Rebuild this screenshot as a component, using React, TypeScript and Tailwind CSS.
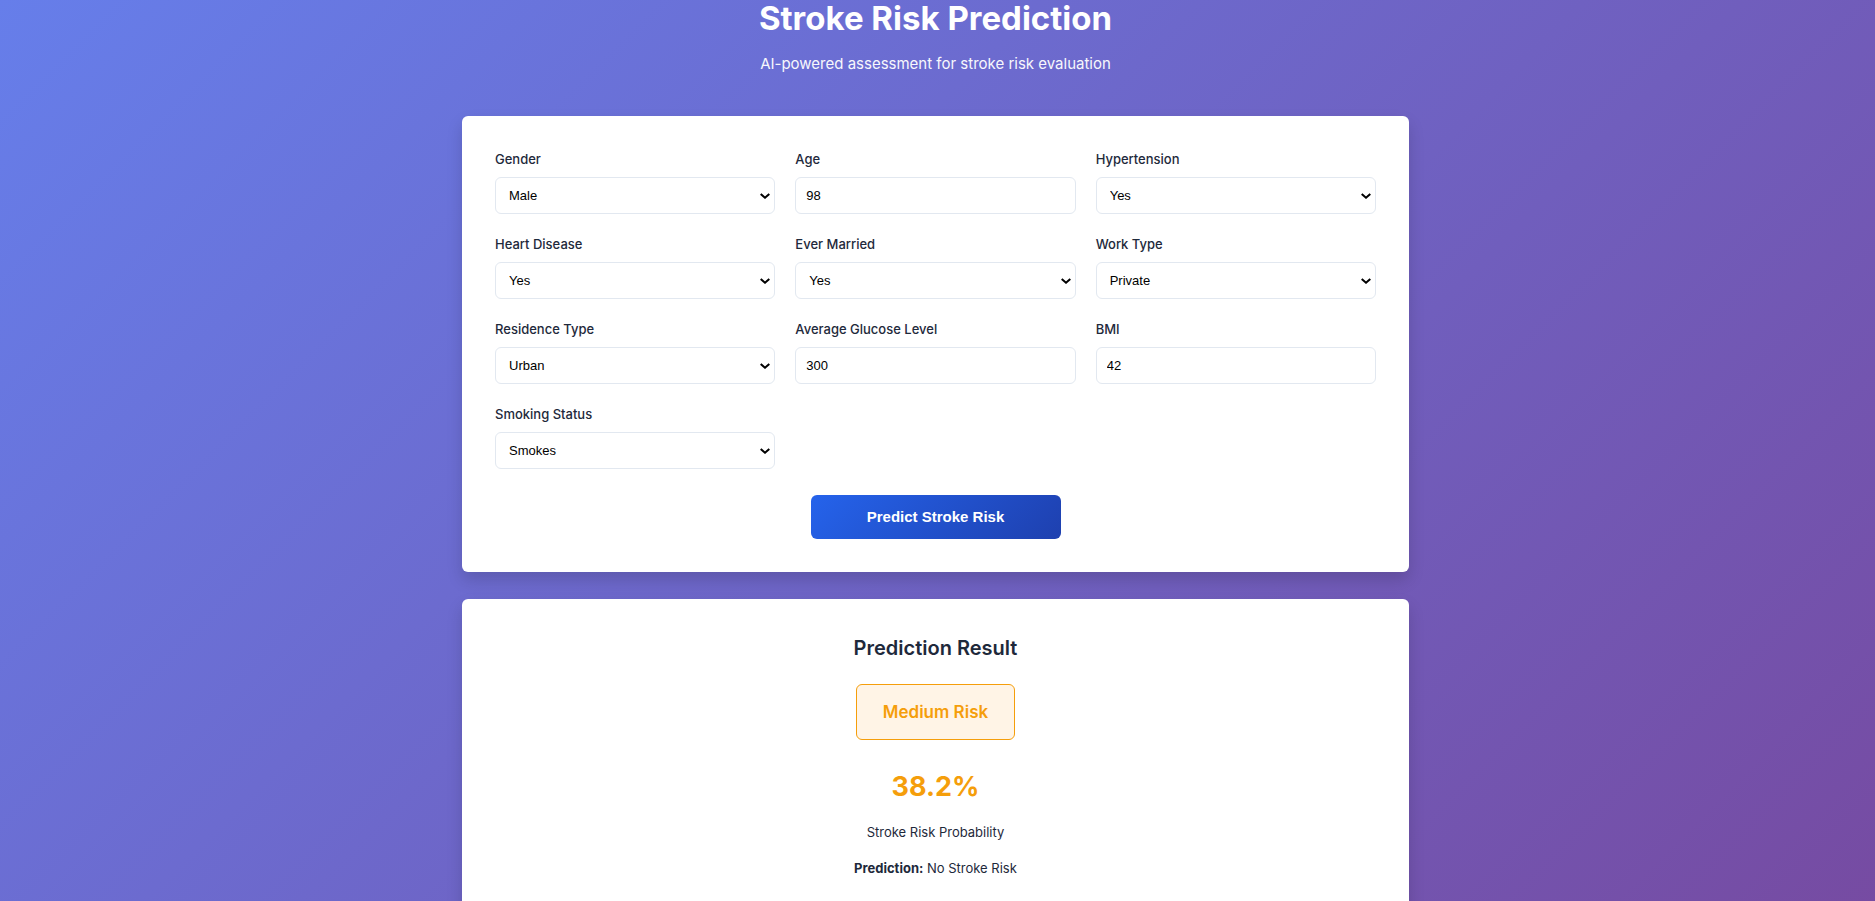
type Field =
  | { id: string; label: string; kind: "select"; options: string[]; value: string }
  | { id: string; label: string; kind: "number"; value: number };

const fields: Field[] = [
  { id: "gender", label: "Gender", kind: "select", options: ["Male", "Female"], value: "Male" },
  { id: "age", label: "Age", kind: "number", value: 98 },
  { id: "hypertension", label: "Hypertension", kind: "select", options: ["No", "Yes"], value: "Yes" },
  { id: "heart-disease", label: "Heart Disease", kind: "select", options: ["No", "Yes"], value: "Yes" },
  { id: "ever-married", label: "Ever Married", kind: "select", options: ["No", "Yes"], value: "Yes" },
  { id: "work-type", label: "Work Type", kind: "select", options: ["Private", "Self-employed"], value: "Private" },
  { id: "residence", label: "Residence Type", kind: "select", options: ["Urban", "Rural"], value: "Urban" },
  { id: "glucose", label: "Average Glucose Level", kind: "number", value: 300 },
  { id: "bmi", label: "BMI", kind: "number", value: 42 },
  { id: "smoking", label: "Smoking Status", kind: "select", options: ["Never smoked", "Smokes"], value: "Smokes" },
];

const control =
  "h-[37px] w-full rounded-md border border-[#e2e8f0] bg-white font-['Liberation_Sans',Arial,sans-serif] text-[13px] text-black";

function FormField({ field }: { field: Field }) {
  return (
    <div className="flex flex-col gap-2">
      <label htmlFor={field.id} className="text-[13px] leading-5 font-medium">
        {field.label}
      </label>
      {field.kind === "select" ? (
        <div className="relative">
          <select id={field.id} defaultValue={field.value} className={`${control} appearance-none pr-6 pl-[13px]`}>
            {field.options.map((option) => (
              <option key={option}>{option}</option>
            ))}
          </select>
          <svg
            aria-hidden="true"
            viewBox="0 0 10 6"
            className="pointer-events-none absolute inset-y-0 right-[5px] my-auto h-1.5 w-2.5"
          >
            <path d="M0.7 0.9 L5 4.7 L9.3 0.9" fill="none" stroke="#000" strokeWidth="2" />
          </svg>
        </div>
      ) : (
        <input id={field.id} type="number" defaultValue={field.value} className={`${control} px-2.5`} />
      )}
    </div>
  );
}

const card = "rounded-md bg-white p-[33px] shadow-[0_8px_16px_rgba(0,0,0,0.15)]";

export default function App() {
  return (
    <div className="min-h-screen bg-[linear-gradient(135deg,#667eea_0%,#764ba2_100%)] pr-1 font-[Inter,sans-serif] text-[#1e293b]">
      <div className="mx-auto flex max-w-[947px] flex-col">
        <header className="pb-10 text-center text-white">
          <h1 className="text-[33px] leading-9 font-bold">Stroke Risk Prediction</h1>
          <p className="mt-4 text-[15px] leading-6 opacity-95">AI-powered assessment for stroke risk evaluation</p>
        </header>

        <main className="flex flex-col gap-[27px]">
          <form className={card} onSubmit={(event) => event.preventDefault()}>
            <div className="grid grid-cols-3 gap-5">
              {fields.map((field) => (
                <FormField key={field.id} field={field} />
              ))}
            </div>
            <button
              type="submit"
              className="mx-auto mt-[26px] block h-11 w-[250px] rounded-md bg-[linear-gradient(135deg,#2563eb,#1e40af)] font-['Liberation_Sans',Arial,sans-serif] text-[15px] font-bold text-white"
            >
              Predict Stroke Risk
            </button>
          </form>

          <section className={`${card} flex flex-col items-center`}>
            <h2 className="text-xl leading-8 font-semibold">Prediction Result</h2>
            <div className="mt-5 rounded-md border border-[#f59e0b] bg-[#fff4e6] px-[26px] py-[13px] text-[17px] leading-7 font-semibold text-[#f59e0b]">
              Medium Risk
            </div>
            <p className="mt-6 text-[27px] leading-[46px] font-bold text-[#f59e0b]">38.2%</p>
            <p className="mt-3 text-[13px] leading-5">Stroke Risk Probability</p>
            <p className="mt-4 text-[13px] leading-5">
              <strong className="font-bold">Prediction:</strong> No Stroke Risk
            </p>
          </section>
        </main>
      </div>
    </div>
  );
}
